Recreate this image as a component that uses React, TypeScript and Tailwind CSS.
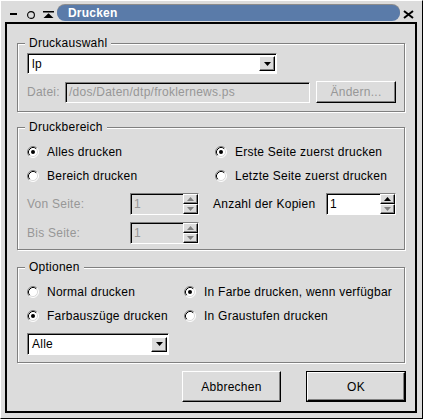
import React from "react";

const raised =
  "border border-t-white border-l-white border-r-black border-b-black shadow-[inset_-1px_-1px_0_#808080]";
const sunken =
  "border border-t-[#808080] border-l-[#808080] border-r-white border-b-white shadow-[inset_1px_1px_0_#000]";
const frame =
  "border border-[#808080] shadow-[inset_1px_1px_0_#fff,1px_1px_0_#fff] flex flex-col";

function Radio({ checked }: { checked?: boolean }) {
  return (
    <svg width="12" height="12" viewBox="0 0 12 12" className="shrink-0">
      <circle cx="6" cy="6" r="5" fill="#fff" />
      <path d="M2.11 9.89 A5.5 5.5 0 0 1 9.89 2.11" stroke="#808080" fill="none" />
      <path d="M9.89 2.11 A5.5 5.5 0 0 1 2.11 9.89" stroke="#fff" fill="none" />
      <path d="M2.82 9.18 A4.5 4.5 0 0 1 9.18 2.82" stroke="#000" fill="none" />
      <path d="M9.18 2.82 A4.5 4.5 0 0 1 2.82 9.18" stroke="#dcdcdc" fill="none" />
      {checked && <circle cx="6" cy="6" r="2" fill="#000" />}
    </svg>
  );
}

function RadioItem({ checked, label, className = "" }: { checked?: boolean; label: string; className?: string }) {
  return (
    <div className={"flex items-center h-[24px] " + className}>
      <Radio checked={checked} />
      <span className="ml-[8px] whitespace-nowrap">{label}</span>
    </div>
  );
}

function Arrow({ dir, color }: { dir: "up" | "down"; color: string }) {
  return (
    <svg width="7" height="4" viewBox="0 0 7 4">
      <polygon points={dir === "up" ? "3.5,0 7,4 0,4" : "0,0 7,0 3.5,4"} fill={color} />
    </svg>
  );
}

function Combo({ value, className = "" }: { value: string; className?: string }) {
  return (
    <div className={sunken + " flex items-center bg-white pl-[4px] pr-[1px] " + className}>
      <span className="flex-1">{value}</span>
      <div className={raised + " w-[16px] h-[15px] flex items-center justify-center bg-[#dcdcdc]"}>
        <Arrow dir="down" color="#000" />
      </div>
    </div>
  );
}

function Spin({ enabled, className = "" }: { enabled?: boolean; className?: string }) {
  return (
    <div
      className={
        sunken +
        " flex h-[22px] " +
        (enabled ? "bg-white text-black " : "bg-[#dcdcdc] text-[#979797] ") +
        className
      }
    >
      <div className="flex-1 pl-[3px] flex items-center">1</div>
      <div className="flex flex-col w-[15px] bg-[#dcdcdc]">
        <div className={raised + " flex-1 flex items-center justify-center"}>
          <Arrow dir="up" color={enabled ? "#000" : "#808080"} />
        </div>
        <div className={raised + " flex-1 flex items-center justify-center"}>
          <Arrow dir="down" color="#808080" />
        </div>
      </div>
    </div>
  );
}

export default function App() {
  return (
    <div className="w-[423px] h-[419px] bg-[#dcdcdc] border border-t-white border-l-white border-r-black border-b-black flex flex-col font-['Liberation_Sans',Arial,sans-serif] text-[12px] tracking-[0.25px] text-black leading-normal">
      {/* title bar */}
      <div className="h-[21px] flex items-start shrink-0">
        <svg width="7" height="2" className="ml-[9px] mt-[12px]">
          <rect width="7" height="2" fill="#000" />
        </svg>
        <svg width="8" height="8" viewBox="0 0 8 8" className="ml-[10px] mt-[10px]">
          <circle cx="4" cy="4" r="3.4" stroke="#000" strokeWidth="1.1" fill="none" />
        </svg>
        <svg width="11" height="7" viewBox="0 0 11 7" className="ml-[8px] mt-[10px]">
          <rect x="0" y="0" width="11" height="1.5" fill="#000" />
          <polygon points="5.5,2.3 10.5,7 0.5,7" fill="#000" />
        </svg>
        <div className="ml-[3px] mt-[4px] w-[343px] h-[16px] rounded-full bg-[#5a7ba9] shadow-[0_-1px_0_#8c8c8c] flex items-center pl-[11px]">
          <span className="text-white font-bold text-[12px] leading-none tracking-[0.2px]">Drucken</span>
        </div>
        <svg width="11" height="9" viewBox="0 0 11 9" className="ml-[3px] mt-[9px]">
          <path d="M1 1 L10 8 M10 1 L1 8" stroke="#000" strokeWidth="2" />
        </svg>
      </div>

      {/* client */}
      <div className="ml-[4px] w-[412px] h-[391px] border-2 border-black flex flex-col px-[10px]">
        {/* Druckauswahl */}
        <div className={frame + " mt-[19px] h-[69px] pl-[9px]"}>
          <div className="-mt-[8px] ml-[-2px] px-[4px] w-fit bg-[#dcdcdc] leading-[15px] h-[15px]">Druckauswahl</div>
          <Combo value="lp" className="mt-[2px] w-[250px] h-[21px]" />
          <div className="mt-[7px] flex items-center h-[22px]">
            <span className="w-[38px] text-[#979797]">Datei:</span>
            <div className={sunken + " w-[245px] h-[21px] flex items-center pl-[3px] text-[#979797] whitespace-nowrap overflow-hidden"}>
              /dos/Daten/dtp/froklernews.ps
            </div>
            <div className={raised + " ml-[6px] w-[80px] h-[22px] flex items-center justify-center text-[#979797]"}>
              Ändern...
            </div>
          </div>
        </div>

        {/* Druckbereich */}
        <div className={frame + " mt-[15px] h-[123px] pl-[9px]"}>
          <div className="-mt-[8px] ml-[-2px] px-[4px] w-fit bg-[#dcdcdc] leading-[15px] h-[15px]">Druckbereich</div>
          <div className="mt-[5px] flex">
            <RadioItem checked label="Alles drucken" className="w-[186px]" />
            <RadioItem checked label="Erste Seite zuerst drucken" className="ml-[2px]" />
          </div>
          <div className="flex">
            <RadioItem label="Bereich drucken" className="w-[186px]" />
            <RadioItem label="Letzte Seite zuerst drucken" className="ml-[2px]" />
          </div>
          <div className="mt-[5px] flex h-[22px] items-center">
            <div className="w-[186px] flex items-center">
              <span className="w-[103px] text-[#979797]">Von Seite:</span>
              <Spin className="w-[69px]" />
            </div>
            <span className="w-[113px] whitespace-nowrap">Anzahl der Kopien</span>
            <Spin enabled className="w-[70px]" />
          </div>
          <div className="mt-[7px] flex h-[22px] items-center">
            <span className="w-[103px] text-[#979797]">Bis Seite:</span>
            <Spin className="w-[69px]" />
          </div>
        </div>

        {/* Optionen */}
        <div className={frame + " mt-[17px] h-[96px] pl-[9px]"}>
          <div className="-mt-[8px] ml-[-2px] px-[4px] w-fit bg-[#dcdcdc] leading-[15px] h-[15px]">Optionen</div>
          <div className="mt-[5px] flex">
            <RadioItem label="Normal drucken" className="w-[157px]" />
            <RadioItem checked label="In Farbe drucken, wenn verfügbar" />
          </div>
          <div className="flex">
            <RadioItem checked label="Farbauszüge drucken" className="w-[157px]" />
            <RadioItem label="In Graustufen drucken" />
          </div>
          <Combo value="Alle" className="mt-[5px] w-[142px] h-[22px]" />
        </div>

        {/* buttons */}
        <div className="mt-[8px] h-[31px] flex justify-end -mr-[1px]">
          <div className={raised + " w-[99px] h-[31px] flex items-center justify-center"}>Abbrechen</div>
          <div className="ml-[25px] w-[100px] h-[31px] border border-black">
            <div className={raised + " w-full h-full flex items-center justify-center"}>OK</div>
          </div>
        </div>
      </div>
    </div>
  );
}
